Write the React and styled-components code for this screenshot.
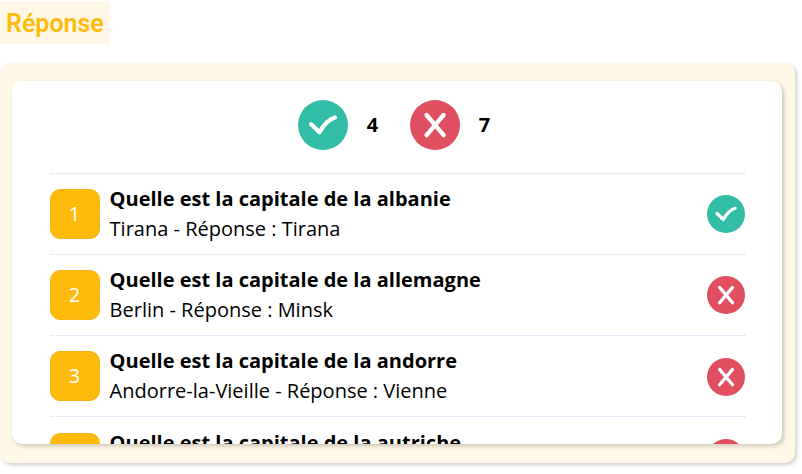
import React from "react";
import styled, { createGlobalStyle } from "styled-components";

const GlobalStyle = createGlobalStyle`
  * { box-sizing: border-box; }
  html, body { margin: 0; height: 474px; overflow: hidden; background: #fff; }
`;

const Page = styled.main`
  width: 802px;
  height: 474px;
  padding-top: 1px;
  overflow: hidden;
  color: #000;
  font: 400 20px/30px "Open Sans", sans-serif;
`;

const Heading = styled.h1`
  width: 110px;
  height: 43px;
  margin: 0 0 19px;
  padding-left: 6px;
  background: #fff7e5;
  color: #ffbb0c;
  font: 600 25px/46px Roboto, sans-serif;
  white-space: nowrap;
`;

const Panel = styled.section`
  width: 795px;
  height: 400px;
  padding: 18px 13px 19px 12px;
  border-radius: 10px;
  background: #fff7e5;
  box-shadow: 2px 2px 4px rgba(0, 0, 0, 0.2);
`;

const Card = styled.div`
  height: 363px;
  padding: 19px 37px 0 38px;
  overflow: hidden;
  border-radius: 10px;
  background: #fff;
  box-shadow: 2px 2px 4px rgba(0, 0, 0, 0.2);
`;

const Summary = styled.div`
  display: flex;
  height: 73px;
  padding-left: 248px;
`;

const Score = styled.div`
  display: flex;
  align-items: center;
  gap: 18.7px;
  width: 112px;
  height: 50px;
  font-weight: 700;
`;

const List = styled.ol`
  margin: 0;
  padding: 0;
  list-style: none;
`;

const Row = styled.li`
  display: flex;
  align-items: center;
  gap: 9.6px;
  height: 81.16px;
  border-top: 1px dotted #d0d0f4;
`;

const Number = styled.span`
  flex: none;
  width: 50px;
  height: 50px;
  padding-right: 1px;
  border: 1px solid #f5b615;
  border-radius: 10px;
  background: #ffbb0c;
  color: #fff;
  line-height: 48px;
  text-align: center;
`;

const Copy = styled.div`
  flex: 1;
  white-space: nowrap;
`;

const Question = styled.div`
  font-weight: 700;
`;

const Icon = styled.svg`
  flex: none;
  display: block;
  width: ${(p) => p.$size}px;
  height: ${(p) => p.$size}px;
  margin-top: ${(p) => (p.$size < 50 ? "0.4px" : 0)};
  fill: none;
  stroke: #fff;
  stroke-width: 4.3;
  stroke-linecap: round;
  stroke-linejoin: round;
`;

function Status({ correct, size }) {
  return (
    <Icon $size={size} viewBox="0 0 50 50" role="img" aria-label={correct ? "Correct" : "Incorrect"}>
      <circle cx="25" cy="25" r="25" fill={correct ? "#32bea6" : "#e04f5f"} stroke="none" />
      {correct ? (
        <path d="M13.2 24.3 21.5 32.2C25 26.2 30 19.5 37 17.5" />
      ) : (
        <path d="M16.6 15 33.6 35.2M33.6 15 16.6 35.2" />
      )}
    </Icon>
  );
}

const answers = [
  { country: "albanie", capital: "Tirana", answer: "Tirana" },
  { country: "allemagne", capital: "Berlin", answer: "Minsk" },
  { country: "andorre", capital: "Andorre-la-Vieille", answer: "Vienne" },
  { country: "autriche", capital: "Vienne", answer: "Berlin" },
];

export default function App() {
  return (
    <>
      <GlobalStyle />
      <Page>
        <Heading>Réponse</Heading>
        <Panel>
          <Card>
            <Summary>
              <Score><Status correct size={50} />4</Score>
              <Score><Status size={50} />7</Score>
            </Summary>
            <List>
              {answers.map(({ country, capital, answer }, index) => (
                <Row key={country}>
                  <Number>{index + 1}</Number>
                  <Copy>
                    <Question>Quelle est la capitale de la {country}</Question>
                    <div>{capital} - Réponse : {answer}</div>
                  </Copy>
                  <Status correct={capital === answer} size={38} />
                </Row>
              ))}
            </List>
          </Card>
        </Panel>
      </Page>
    </>
  );
}
